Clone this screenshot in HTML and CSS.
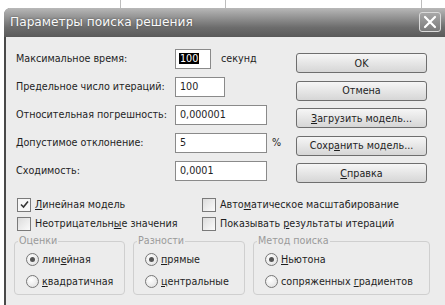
FILE: index.html
```html
<!DOCTYPE html>
<html lang="ru">
<head>
    <meta charset="UTF-8">
    <title>Параметры поиска решения</title>
    <link rel="stylesheet" href="styles.css">
</head>
<body>

<div class="backdrop">
  <span class="cell c1"></span>
  <span class="cell c2"></span>
  <span class="cell c3"></span>
</div>

<div class="window">
  <div class="titlebar">
    <span class="title">Параметры поиска решения</span>
    <span class="close">
      <svg width="14" height="14" viewBox="0 0 14 14"><path d="M2 2 L12 12 M12 2 L2 12" stroke="#fff" stroke-width="2.2" stroke-linecap="round"/></svg>
    </span>
  </div>

  <div class="client">
    <div class="top">
      <div class="fields">
        <div class="row">
          <span class="label">Максимальное время:</span>
          <span class="input w-short"><span class="selected">100</span></span>
          <span class="unit">секунд</span>
        </div>
        <div class="row">
          <span class="label">Предельное число итераций:</span>
          <span class="input w-mid">100</span>
        </div>
        <div class="row">
          <span class="label">Относительная погрешность:</span>
          <span class="input w-long">0,000001</span>
        </div>
        <div class="row">
          <span class="label">Допустимое отклонение:</span>
          <span class="input w-long">5</span>
          <span class="unit pct">%</span>
        </div>
        <div class="row">
          <span class="label">Сходимость:</span>
          <span class="input w-long">0,0001</span>
        </div>
      </div>

      <div class="buttons">
        <button class="btn" type="button">OK</button>
        <button class="btn" type="button">Отмена</button>
        <button class="btn" type="button"><u>З</u>агрузить модель...</button>
        <button class="btn" type="button">Сохр<u>а</u>нить модель...</button>
        <button class="btn" type="button"><u>С</u>правка</button>
      </div>
    </div>

    <div class="checks">
      <div class="check"><span class="box on"><svg width="11" height="11" viewBox="0 0 11 11"><path d="M2 5.5 L4.5 8 L9 2.5" fill="none" stroke="#333" stroke-width="1.6"/></svg></span><span><u>Л</u>инейная модель</span></div>
      <div class="check"><span class="box"></span><span>Авто<u>м</u>атическое масштабирование</span></div>
      <div class="check"><span class="box"></span><span>Неотрицательн<u>ы</u>е значения</span></div>
      <div class="check"><span class="box"></span><span>Показывать <u>р</u>езультаты итераций</span></div>
    </div>

    <div class="groups">
      <fieldset class="group g1">
        <legend>Оценки</legend>
        <div class="radio"><span class="dot on"></span><span>лин<u>е</u>йная</span></div>
        <div class="radio"><span class="dot"></span><span><u>к</u>вадратичная</span></div>
      </fieldset>
      <fieldset class="group g2">
        <legend>Разности</legend>
        <div class="radio"><span class="dot on"></span><span><u>п</u>рямые</span></div>
        <div class="radio"><span class="dot"></span><span><u>ц</u>ентральные</span></div>
      </fieldset>
      <fieldset class="group g3">
        <legend>Метод поиска</legend>
        <div class="radio"><span class="dot on"></span><span><u>Н</u>ьютона</span></div>
        <div class="radio"><span class="dot"></span><span>сопряженных <u>г</u>радиентов</span></div>
      </fieldset>
    </div>
  </div>
</div>

</body>
</html>
```

FILE: styles.css
```css
body {
  margin: 0;
  width: 445px;
  height: 305px;
  overflow: hidden;
  background: #ffffff;
  font-family: "DejaVu Sans", sans-serif;
  font-size: 9.6px;
  color: #1e1e1e;
}

u {
  text-decoration: underline;
  text-underline-offset: 1px;
}

/* window behind the dialog */
.backdrop {
  display: flex;
  height: 8px;
  margin-left: 4px;
}
.cell {
  height: 8px;
  border-right: 1px solid #bdbdbd;
}
.c1 { width: 116px; }
.c2 { width: 104px; }
.c3 { width: 195px; }

.window {
  margin-left: 4px;
  width: 460px;
  height: 297px;
  border-left: 2px solid #4a4a4a;
  background: #ececec;
  border-top-left-radius: 7px;
}

.titlebar {
  height: 28px;
  display: flex;
  align-items: center;
  justify-content: space-between;
  border-top-left-radius: 6px;
  background: linear-gradient(#b8b8b8 0%, #929292 35%, #6c6c6c 70%, #5c5c5c 100%);
  border-bottom: 1px solid #5a5a5a;
  padding-left: 6px;
  margin-left: -2px;
}

.title {
  color: #fafafa;
  font-size: 12.2px;
  text-shadow: 0 0 2px #444;
}

.close {
  box-sizing: border-box;
  width: 22px;
  height: 20px;
  margin-right: 25px;
  border: 1px solid #dadada;
  border-radius: 3px;
  background: linear-gradient(#a8a8a8, #7a7a7a);
  display: flex;
  align-items: center;
  justify-content: center;
}

.client {
  padding-left: 10px;
}

.top {
  display: flex;
}

.fields {
  width: 280px;
  padding-top: 12px;
}

.row {
  height: 28px;
  display: flex;
  align-items: flex-start;
}

.label {
  width: 159px;
  line-height: 20px;
}

.input {
  box-sizing: border-box;
  height: 20px;
  line-height: 18px;
  background: #ffffff;
  border: 1px solid #8a8a8a;
  padding-left: 4px;
}
.w-short { width: 36px; padding-left: 3px; }
.w-mid { width: 50px; }
.w-long { width: 92px; }

.selected {
  background: #000000;
  color: #ffffff;
  padding: 0 1px;
}

.unit {
  line-height: 20px;
  margin-left: 10px;
}
.unit.pct {
  margin-left: 5px;
}

.buttons {
  width: 131px;
  padding-top: 16px;
  display: flex;
  flex-direction: column;
  gap: 7.5px;
}

.btn {
  height: 20px;
  padding: 0;
  font-family: "DejaVu Sans", sans-serif;
  font-size: 9.6px;
  color: #1e1e1e;
  border: 1px solid #6e6e6e;
  border-radius: 3px;
  background: linear-gradient(#f6f6f6 0%, #e6e6e6 50%, #d6d6d6 100%);
}

.checks {
  display: grid;
  grid-template-columns: 185px auto;
  margin-top: 6px;
  margin-left: 1px;
}

.check {
  height: 19px;
  display: flex;
  align-items: center;
}

.box {
  box-sizing: border-box;
  width: 14px;
  height: 14px;
  border: 1px solid #7a7a7a;
  background: linear-gradient(135deg, #dcdcdc, #fbfbfb);
  margin-right: 4px;
  display: flex;
  align-items: center;
  justify-content: center;
}
.box.on {
  background: #f6f6f6;
}

.groups {
  display: flex;
  gap: 8px;
  margin-top: 2px;
  margin-left: -2px;
}

.group {
  box-sizing: border-box;
  flex: none;
  height: 60px;
  margin: 0;
  min-width: 0;
  padding: 1px 4px 0 11px;
  border: 1px solid #cfcfcf;
  border-radius: 4px;
}
.g1 { width: 111px; }
.g2 { width: 112px; }
.g3 { width: 177px; }

.group legend {
  padding: 0 1px;
  margin-left: -8px;
  color: #9a9a9a;
  line-height: 12px;
}

.radio {
  height: 22px;
  display: flex;
  align-items: center;
  white-space: nowrap;
}

.dot {
  box-sizing: border-box;
  width: 13px;
  height: 13px;
  border: 1px solid #777;
  border-radius: 50%;
  background: radial-gradient(circle at 40% 35%, #ffffff, #dcdcdc);
  margin-right: 3px;
  display: flex;
  align-items: center;
  justify-content: center;
}
.dot.on::after {
  content: "";
  width: 5px;
  height: 5px;
  border-radius: 50%;
  background: #555;
}
```
